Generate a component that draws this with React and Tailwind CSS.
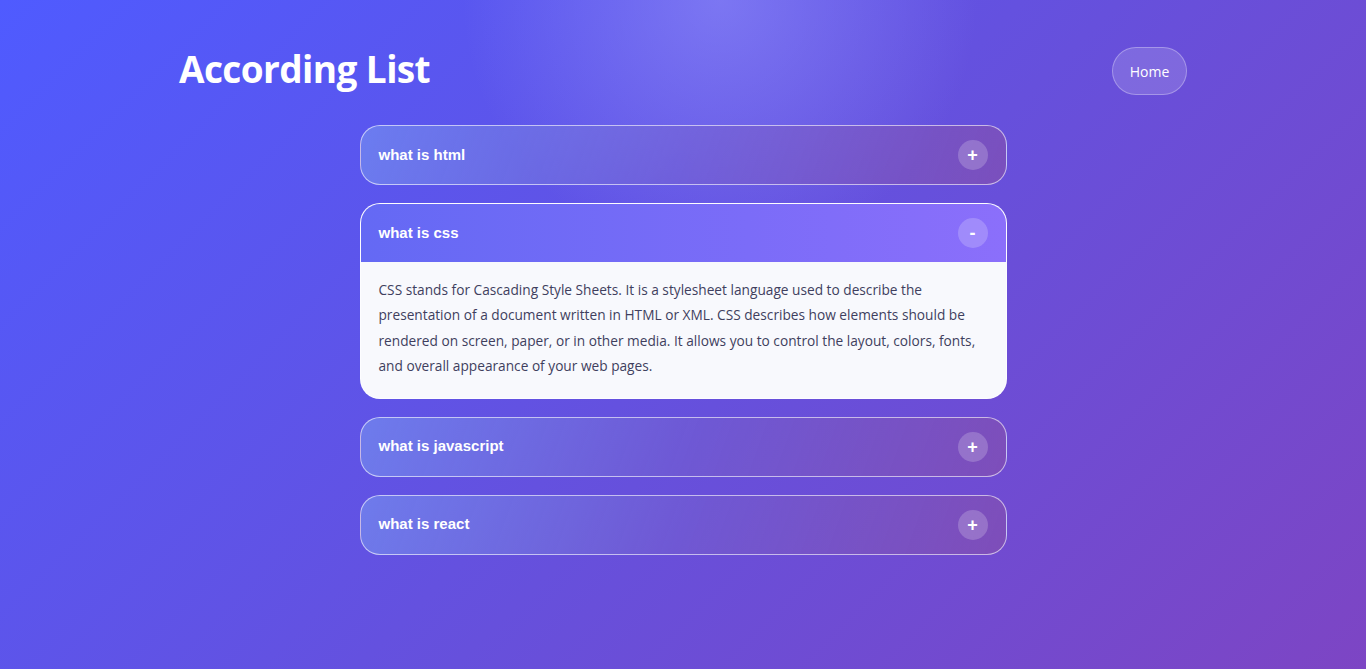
import { useState } from 'react'

const items = [
    { q: 'what is html', a: 'HTML stands for HyperText Markup Language. It is the standard markup language used to create the structure of web pages.' },
    { q: 'what is css', a: 'CSS stands for Cascading Style Sheets. It is a stylesheet language used to describe the presentation of a document written in HTML or XML. CSS describes how elements should be rendered on screen, paper, or in other media. It allows you to control the layout, colors, fonts, and overall appearance of your web pages.' },
    { q: 'what is javascript', a: 'JavaScript is a programming language that makes web pages interactive.' },
    { q: 'what is react', a: 'React is a JavaScript library for building user interfaces.' },
]

export default function App() {
    const [open, setOpen] = useState(1)

    return (
        <div className="relative min-h-[669px] overflow-hidden bg-[linear-gradient(135deg,#4f5bff_0%,#6650dc_55%,#7d45c4_100%)] font-['Open_Sans',sans-serif]">
            {/* soft glow at the top */}
            <div className="pointer-events-none absolute left-[460px] top-[-260px] h-[520px] w-[520px] rounded-full bg-[radial-gradient(circle,rgba(160,160,255,0.45)_0%,rgba(160,160,255,0)_70%)]" />

            <div className="relative mx-auto w-[1008px] pt-[47px]">
                <header className="flex items-center justify-between">
                    <h1 className="mb-[6px] text-[37px] font-bold leading-none tracking-[-0.6px] text-white">According List</h1>
                    <button className="h-[48px] w-[75px] rounded-full border border-white/30 bg-white/15 text-[14px] text-white">Home</button>
                </header>

                <div className="mx-auto mt-[30px] flex w-[647px] flex-col gap-[18px]">
                    {items.map((it, i) => {
                        const isOpen = open === i
                        return (
                            <div key={it.q} className={`overflow-hidden rounded-[20px] border ${isOpen ? 'border-white/70 bg-[#f8f9fd]' : 'border-white/60 bg-[linear-gradient(110deg,rgba(120,150,240,0.6)_0%,rgba(120,100,205,0.45)_50%,rgba(135,80,170,0.6)_100%)]'}`}>
                                <button
                                    onClick={() => setOpen(isOpen ? -1 : i)}
                                    className={`flex h-[58px] w-full items-center justify-between px-[18px] text-left ${isOpen ? 'bg-[linear-gradient(90deg,#6469f4_0%,#7b6cf8_60%,#8b6ffb_100%)]' : ''}`}
                                >
                                    <span className="font-['Liberation_Sans',sans-serif] text-[15px] font-bold text-white">{it.q}</span>
                                    <span className="flex h-[30px] w-[30px] items-center justify-center rounded-full bg-white/20 font-['Liberation_Sans',sans-serif] text-[18px] font-bold leading-none text-white">
                                        {isOpen ? '-' : '+'}
                                    </span>
                                </button>
                                {isOpen && (
                                    <div className="px-[18px] pb-[19px] pt-[15px] text-[13.7px] leading-[25.4px] text-[#3f3f5e]">
                                        {it.a}
                                    </div>
                                )}
                            </div>
                        )
                    })}
                </div>
            </div>
        </div>
    )
}
